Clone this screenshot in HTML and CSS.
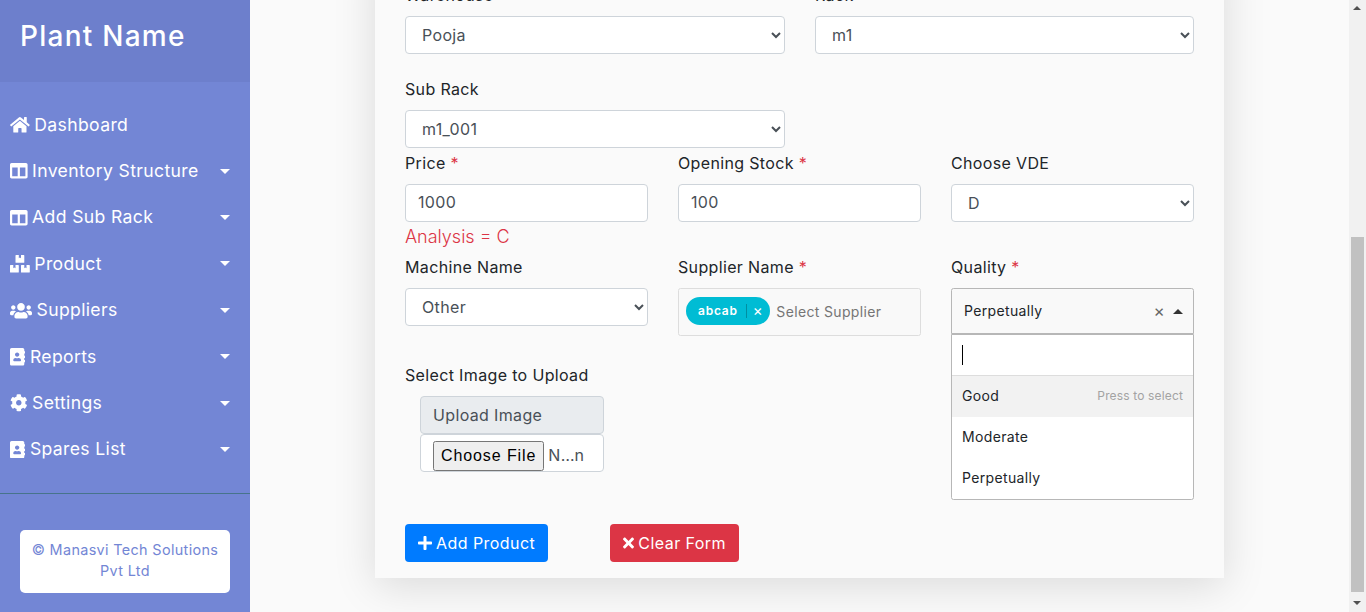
FILE: index.html
```html
<!doctype html>
<html lang="en">
<head>
    <meta charset="UTF-8">
    <meta name="viewport" content="width=device-width, initial-scale=1.0">
    <title>Add Product</title>
    <link rel="stylesheet" href="styles.css">
</head>
<body>
<div class="wrapper">
    <nav class="sidebar">
        <div class="sidebar-header">
            <h3>Plant Name</h3>
        </div>
        <ul class="menu">
            <li><a href="#"><span class="menu-label"><svg class="ic" viewBox="0 0 576 512"><path d="M280.37 148.26L96 300.11V464a16 16 0 0 0 16 16l112.06-.29a16 16 0 0 0 15.92-16V368a16 16 0 0 1 16-16h64a16 16 0 0 1 16 16v95.64a16 16 0 0 0 16 16.05L464 480a16 16 0 0 0 16-16V300L295.67 148.26a12.19 12.19 0 0 0-15.3 0zM571.6 251.47L488 182.56V44.05a12 12 0 0 0-12-12h-56a12 12 0 0 0-12 12v72.61L318.47 43a48 48 0 0 0-61 0L4.34 251.47a12 12 0 0 0-1.6 16.9l25.5 31A12 12 0 0 0 45.15 301l235.22-193.74a12.19 12.19 0 0 1 15.3 0L530.9 301a12 12 0 0 0 16.9-1.6l25.5-31a12 12 0 0 0-1.7-16.93z"/></svg>Dashboard</span></a></li>
            <li><a href="#"><span class="menu-label"><svg class="ic ic-sq" viewBox="0 0 512 512"><path d="M464 32H48C21.49 32 0 53.49 0 80v352c0 26.51 21.49 48 48 48h416c26.51 0 48-21.49 48-48V80c0-26.51-21.49-48-48-48zM224 416H64V160h160v256zm224 0H288V160h160v256z"/></svg>Inventory Structure</span><i class="caret"></i></a></li>
            <li><a href="#"><span class="menu-label"><svg class="ic ic-sq" viewBox="0 0 512 512"><path d="M464 32H48C21.49 32 0 53.49 0 80v352c0 26.51 21.49 48 48 48h416c26.51 0 48-21.49 48-48V80c0-26.51-21.49-48-48-48zM224 416H64V160h160v256zm224 0H288V160h160v256z"/></svg>Add Sub Rack</span><i class="caret"></i></a></li>
            <li><a href="#"><span class="menu-label"><svg class="ic" viewBox="0 0 576 512"><path d="M560 288h-80v96l-32-21.3-32 21.3v-96h-80c-8.8 0-16 7.2-16 16v192c0 8.8 7.2 16 16 16h224c8.8 0 16-7.2 16-16V304c0-8.8-7.2-16-16-16zm-384-64h224c8.8 0 16-7.2 16-16V16c0-8.8-7.2-16-16-16h-80v96l-32-21.3L256 96V0h-80c-8.8 0-16 7.2-16 16v192c0 8.8 7.2 16 16 16zm64 64h-80v96l-32-21.3L96 384v-96H16c-8.8 0-16 7.2-16 16v192c0 8.8 7.2 16 16 16h224c8.8 0 16-7.2 16-16V304c0-8.8-7.2-16-16-16z"/></svg>Product</span><i class="caret"></i></a></li>
            <li><a href="#"><span class="menu-label"><svg class="ic ic-wide" viewBox="0 0 640 512"><path d="M96 224c35.3 0 64-28.7 64-64s-28.7-64-64-64-64 28.7-64 64 28.7 64 64 64zm448 0c35.3 0 64-28.7 64-64s-28.7-64-64-64-64 28.7-64 64 28.7 64 64 64zm32 32h-64c-17.6 0-33.5 7.1-45.1 18.6 40.3 22.1 68.9 62 75.1 109.4h66c17.7 0 32-14.3 32-32v-32c0-35.3-28.7-64-64-64zm-256 0c61.9 0 112-50.1 112-112S381.9 32 320 32 208 82.1 208 144s50.1 112 112 112zm76.8 32h-8.3c-20.8 10-43.9 16-68.5 16s-47.6-6-68.5-16h-8.3C179.6 288 128 339.6 128 403.2V432c0 26.5 21.5 48 48 48h288c26.5 0 48-21.5 48-48v-28.8c0-63.6-51.6-115.2-115.2-115.2zm-223.7-13.4C161.5 263.1 145.6 256 128 256H64c-35.3 0-64 28.7-64 64v32c0 17.7 14.3 32 32 32h65.9c6.3-47.4 34.9-87.3 75.2-109.4z"/></svg>Suppliers</span><i class="caret"></i></a></li>
            <li><a href="#"><span class="menu-label"><svg class="ic ic-book" viewBox="0 0 448 512"><path d="M436 160c6.6 0 12-5.4 12-12v-40c0-6.6-5.4-12-12-12h-20V48c0-26.5-21.5-48-48-48H48C21.5 0 0 21.5 0 48v416c0 26.5 21.5 48 48 48h320c26.5 0 48-21.5 48-48v-48h20c6.6 0 12-5.4 12-12v-40c0-6.6-5.4-12-12-12h-20v-64h20c6.6 0 12-5.4 12-12v-40c0-6.6-5.4-12-12-12h-20v-64h20zm-228-32c35.3 0 64 28.7 64 64s-28.7 64-64 64-64-28.7-64-64 28.7-64 64-64zm112 236.8c0 10.6-10 19.2-22.4 19.2H118.4C106 384 96 375.4 96 364.8v-19.2c0-31.8 30.1-57.6 67.2-57.6h5c12.3 5.1 25.7 8 39.8 8s27.6-2.9 39.8-8h5c37.1 0 67.2 25.8 67.2 57.6v19.2z"/></svg>Reports</span><i class="caret"></i></a></li>
            <li><a href="#"><span class="menu-label"><svg class="ic ic-sq" viewBox="0 0 512 512"><path d="M487.4 315.7l-42.6-24.6c4.3-23.2 4.3-47 0-70.2l42.6-24.6c4.9-2.8 7.1-8.6 5.5-14-11.1-35.6-30-67.8-54.7-94.6-3.8-4.1-10-5.1-14.8-2.3L380.8 110c-17.9-15.4-38.5-27.3-60.8-35.1V25.8c0-5.6-3.9-10.5-9.4-11.7-36.7-8.2-74.3-7.8-109.2 0-5.5 1.2-9.4 6.1-9.4 11.7V75c-22.2 7.9-42.8 19.8-60.8 35.1L88.7 85.5c-4.9-2.8-11-1.9-14.8 2.3-24.7 26.7-43.6 58.9-54.7 94.6-1.7 5.4.6 11.2 5.5 14L67.3 221c-4.3 23.2-4.3 47 0 70.2l-42.6 24.6c-4.9 2.8-7.1 8.6-5.5 14 11.1 35.6 30 67.8 54.7 94.6 3.8 4.1 10 5.1 14.8 2.3l42.6-24.6c17.9 15.4 38.5 27.3 60.8 35.1v49.2c0 5.6 3.9 10.5 9.4 11.7 36.7 8.2 74.3 7.8 109.2 0 5.5-1.2 9.4-6.1 9.4-11.7v-49.2c22.2-7.9 42.8-19.8 60.8-35.1l42.6 24.6c4.9 2.8 11 1.9 14.8-2.3 24.7-26.7 43.6-58.9 54.7-94.6 1.5-5.5-.7-11.3-5.6-14.1zM256 336c-44.1 0-80-35.9-80-80s35.9-80 80-80 80 35.9 80 80-35.9 80-80 80z"/></svg>Settings</span><i class="caret"></i></a></li>
            <li><a href="#"><span class="menu-label"><svg class="ic ic-book" viewBox="0 0 448 512"><path d="M436 160c6.6 0 12-5.4 12-12v-40c0-6.6-5.4-12-12-12h-20V48c0-26.5-21.5-48-48-48H48C21.5 0 0 21.5 0 48v416c0 26.5 21.5 48 48 48h320c26.5 0 48-21.5 48-48v-48h20c6.6 0 12-5.4 12-12v-40c0-6.6-5.4-12-12-12h-20v-64h20c6.6 0 12-5.4 12-12v-40c0-6.6-5.4-12-12-12h-20v-64h20zm-228-32c35.3 0 64 28.7 64 64s-28.7 64-64 64-64-28.7-64-64 28.7-64 64-64zm112 236.8c0 10.6-10 19.2-22.4 19.2H118.4C106 384 96 375.4 96 364.8v-19.2c0-31.8 30.1-57.6 67.2-57.6h5c12.3 5.1 25.7 8 39.8 8s27.6-2.9 39.8-8h5c37.1 0 67.2 25.8 67.2 57.6v19.2z"/></svg>Spares List</span><i class="caret"></i></a></li>
        </ul>
        <div class="cta">
            <p>&copy; Manasvi Tech Solutions Pvt Ltd</p>
        </div>
    </nav>

    <main class="content">
        <form class="card">
            <div class="row-2">
                <div class="field">
                    <label>Warehouse</label>
                    <select class="control"><option>Pooja</option></select>
                </div>
                <div class="field">
                    <label>Rack</label>
                    <select class="control"><option>m1</option></select>
                </div>
            </div>
            <div class="row-2 row-subrack">
                <div class="field">
                    <label>Sub Rack</label>
                    <select class="control"><option>m1_001</option></select>
                </div>
            </div>
            <div class="row-3 row-price">
                <div class="field">
                    <label>Price <span class="req">*</span></label>
                    <input class="control" type="text" value="1000">
                    <p class="analysis">Analysis = C</p>
                </div>
                <div class="field">
                    <label>Opening Stock <span class="req">*</span></label>
                    <input class="control" type="text" value="100">
                </div>
                <div class="field">
                    <label>Choose VDE</label>
                    <select class="control"><option>D</option></select>
                </div>
            </div>
            <div class="row-3 row-machine">
                <div class="field">
                    <label>Machine Name</label>
                    <select class="control"><option>Other</option></select>
                </div>
                <div class="field">
                    <label>Supplier Name <span class="req">*</span></label>
                    <div class="choices-box">
                        <span class="pill">abcab<span class="pill-x">&times;</span></span>
                        <span class="choices-placeholder">Select Supplier</span>
                    </div>
                </div>
                <div class="field">
                    <label>Quality <span class="req">*</span></label>
                    <div class="choices-single">
                        <span>Perpetually</span>
                        <span class="single-x">&times;</span>
                        <i class="up-arrow"></i>
                        <div class="choices-list">
                            <div class="choices-search"><i class="text-cursor"></i></div>
                            <div class="choices-item active">Good<small>Press to select</small></div>
                            <div class="choices-item">Moderate</div>
                            <div class="choices-item">Perpetually</div>
                        </div>
                    </div>
                </div>
            </div>
            <div class="upload">
                <label>Select Image to Upload</label>
                <div class="upload-group">
                    <div class="upload-title">Upload Image</div>
                    <input class="control upload-file" type="file">
                </div>
            </div>
            <div class="actions">
                <button type="button" class="btn btn-blue"><svg class="btn-ic" viewBox="0 0 448 512"><path d="M416 208H272V64c0-17.67-14.33-32-32-32h-32c-17.67 0-32 14.33-32 32v144H32c-17.67 0-32 14.33-32 32v32c0 17.67 14.33 32 32 32h144v144c0 17.67 14.33 32 32 32h32c17.67 0 32-14.33 32-32V304h144c17.67 0 32-14.33 32-32v-32c0-17.67-14.33-32-32-32z"/></svg>Add Product</button>
                <button type="button" class="btn btn-red"><svg class="btn-ic btn-ic-x" viewBox="0 0 352 512"><path d="M242.72 256l100.07-100.07c12.28-12.28 12.28-32.19 0-44.48l-22.24-22.24c-12.28-12.28-32.19-12.28-44.48 0L176 189.28 75.93 89.21c-12.28-12.28-32.19-12.28-44.48 0L9.21 111.45c-12.28 12.28-12.28 32.19 0 44.48L109.28 256 9.21 356.07c-12.28 12.28-12.28 32.19 0 44.48l22.24 22.24c12.28 12.28 32.2 12.28 44.48 0L176 322.72l100.07 100.07c12.28 12.28 32.2 12.28 44.48 0l22.24-22.24c12.28-12.28 12.28-32.19 0-44.48L242.72 256z"/></svg>Clear Form</button>
            </div>
        </form>
    </main>

    <div class="scrollbar">
        <i class="sb-up"></i>
        <div class="sb-track"><div class="sb-thumb"></div></div>
        <i class="sb-down"></i>
    </div>
</div>
</body>
</html>
```

FILE: styles.css
```css
* {
    box-sizing: border-box;
}
body {
    font-family: Inter, "Open Sans", sans-serif;
    font-size: 16px;
    line-height: 24px;
    letter-spacing: 0.35px;
    color: #212529;
    background-color: #fafafa;
    margin: 0;
    height: 100vh;
    overflow: hidden;
}
.wrapper {
    display: flex;
    height: 100vh;
}

/* sidebar */
.sidebar {
    width: 250px;
    flex-shrink: 0;
    background-color: #7386d5;
    color: #fff;
}
.sidebar-header {
    padding: 20px;
    background-color: #6d7fcc;
}
.sidebar-header h3 {
    margin: 0 0 8px;
    font-size: 28px;
    line-height: 33.6px;
    font-weight: 500;
    letter-spacing: 1.25px;
}
.menu {
    list-style: none;
    margin: 0;
    padding: 20px 0;
    border-bottom: 1px solid #47748b;
}
.menu a {
    display: flex;
    justify-content: space-between;
    align-items: center;
    height: 46.4px;
    padding: 10px 20px 10px 10px;
    font-size: 17.6px;
    line-height: 26.4px;
    color: #fff;
    text-decoration: none;
}
.menu-label {
    display: flex;
    align-items: center;
}
.ic {
    width: 19.8px;
    height: 17.6px;
    margin-right: 4.5px;
    fill: #fff;
}
.ic-sq {
    width: 17.6px;
}
.ic-wide {
    width: 22px;
}
.ic-book {
    width: 15.4px;
}
.caret {
    border-top: 5.3px solid #fff;
    border-left: 5.3px solid transparent;
    border-right: 5.3px solid transparent;
}
.cta {
    padding: 36px 20px 0;
}
.cta p {
    margin: 0;
    padding: 9px 10px 11px;
    background-color: #fff;
    border-radius: 5px;
    color: #7386d5;
    font-size: 14.4px;
    line-height: 21.5px;
    text-align: center;
}

/* form */
.content {
    flex: 1;
    min-width: 0;
}
.card {
    width: 849px;
    margin: -46px auto 0;
    padding: 30px 30px 16px;
    background-color: #fafafa;
    box-shadow: 0 8px 40px rgba(0, 0, 0, 0.13);
}
.row-2 {
    display: grid;
    grid-template-columns: 380px 379px;
    gap: 30px;
}
.row-3 {
    display: grid;
    grid-template-columns: repeat(3, 243px);
    gap: 30px;
}
.row-subrack {
    margin-top: 24px;
}
.row-price {
    margin-top: 4px;
}
.row-machine {
    margin-top: 7px;
}
.field label,
.upload label {
    display: block;
    margin-bottom: 10px;
    line-height: 22px;
}
.req {
    color: #dc3545;
}
.control {
    display: block;
    width: 100%;
    height: 38px;
    padding: 6px 12px;
    background-color: #fff;
    border: 1px solid #ced4da;
    border-radius: 4px;
    color: #495057;
    font: inherit;
    letter-spacing: inherit;
}
input[type="text"].control {
    padding: 5px 12px 7px;
}
.analysis {
    margin: 3px 0 0;
    color: #dc3545;
    font-size: 18px;
    font-weight: 300;
    letter-spacing: 0;
}

/* supplier multi select */
.choices-box {
    display: flex;
    align-items: center;
    height: 48px;
    padding: 0 7px;
    background-color: #f9f9f9;
    border: 1px solid #ddd;
    border-radius: 2.5px;
}
.pill {
    display: flex;
    align-items: center;
    height: 28px;
    margin-bottom: 2px;
    padding: 0 7px 0 12px;
    background-color: #00bcd4;
    border-radius: 14px;
    color: #fff;
    font-size: 12px;
    font-weight: 600;
    letter-spacing: 0.75px;
}
.pill-x {
    margin-left: 8px;
    padding-left: 6px;
    border-left: 1px solid #008fa1;
    line-height: 14px;
    font-size: 15px;
    font-weight: 400;
}
.choices-placeholder {
    margin-left: 6px;
    color: #757575;
    font-size: 14px;
}

/* quality single select, open */
.choices-single {
    position: relative;
    display: flex;
    align-items: center;
    height: 46px;
    padding: 0 10px 0 12px;
    background-color: #f9f9f9;
    border: 1px solid #b7b7b7;
    border-radius: 2.5px 2.5px 0 0;
    font-size: 14px;
}
.single-x {
    margin-left: auto;
    margin-right: 8px;
    color: #666;
    font-size: 17px;
}
.up-arrow {
    border-bottom: 5px solid #333;
    border-left: 5px solid transparent;
    border-right: 5px solid transparent;
}
.choices-list {
    position: absolute;
    top: 45px;
    left: -1px;
    right: -1px;
    height: 166px;
    background-color: #fff;
    border: 1px solid #b7b7b7;
    border-radius: 0 0 2.5px 2.5px;
}
.choices-search {
    height: 41px;
    padding: 10px;
    border-bottom: 1px solid #ddd;
}
.text-cursor {
    display: block;
    width: 1px;
    height: 20px;
    background-color: #000;
}
.choices-item {
    display: flex;
    justify-content: space-between;
    align-items: center;
    height: 41px;
    padding: 0 10px 2px;
}
.choices-item.active {
    background-color: #f2f2f2;
}
.choices-item small {
    color: #a3a3a3;
    font-size: 12px;
    letter-spacing: 0.15px;
}

/* upload */
.upload {
    margin-top: 28px;
}
.upload-group {
    width: 184px;
    margin-left: 15px;
}
.upload-title {
    height: 38px;
    padding: 6px 12px;
    background-color: #e9ecef;
    border: 1px solid #ced4da;
    border-radius: 4px;
    color: #495057;
}
.upload-file {
    overflow: hidden;
}
.upload-file::file-selector-button {
    height: 30px;
    letter-spacing: 0.9px;
}

/* buttons */
.actions {
    display: flex;
    gap: 62px;
    margin-top: 52px;
}
.btn {
    display: flex;
    align-items: center;
    height: 38px;
    padding: 6px 12px;
    border: 1px solid transparent;
    border-radius: 4px;
    color: #fff;
    font: inherit;
    letter-spacing: 0.45px;
}
.btn-blue {
    background-color: #007bff;
}
.btn-red {
    background-color: #dc3545;
}
.btn-ic {
    width: 14px;
    height: 16px;
    margin-right: 4px;
    fill: #fff;
}
.btn-ic-x {
    width: 11px;
}

/* page scrollbar, page is scrolled down */
.scrollbar {
    display: flex;
    flex-direction: column;
    align-items: center;
    width: 17px;
    flex-shrink: 0;
    background-color: #f1f1f1;
}
.sb-up,
.sb-down {
    height: 17px;
    width: 17px;
    position: relative;
}
.sb-up::after,
.sb-down::after {
    content: "";
    position: absolute;
    left: 4px;
    top: 6px;
    border-left: 4px solid transparent;
    border-right: 4px solid transparent;
}
.sb-up::after {
    border-bottom: 4px solid #505050;
}
.sb-down::after {
    border-top: 4px solid #505050;
}
.sb-track {
    flex: 1;
    width: 100%;
    padding: 220px 2px 3px;
}
.sb-thumb {
    height: 100%;
    background-color: #c1c1c1;
}
```
